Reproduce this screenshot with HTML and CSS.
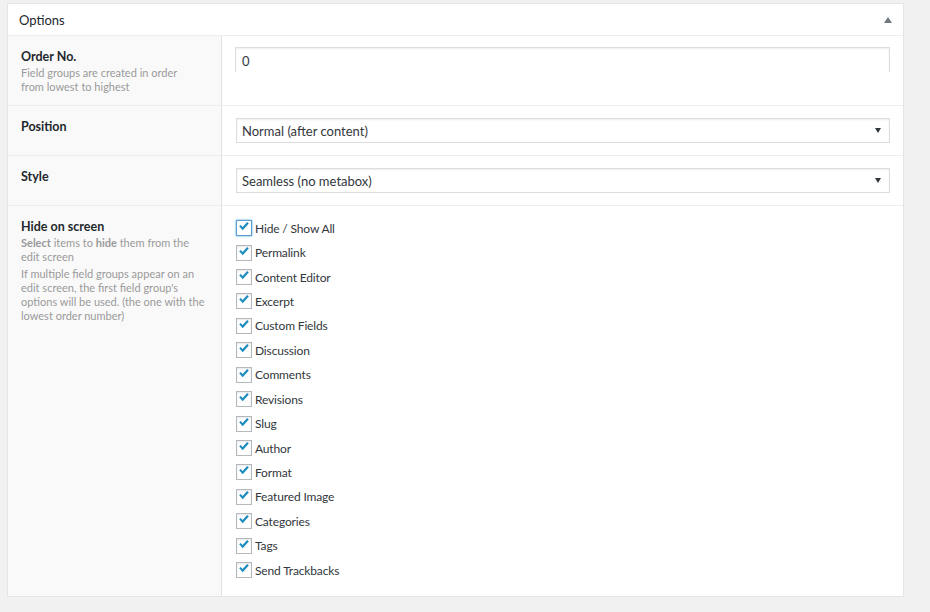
FILE: index.html
```html
<!DOCTYPE html>
<html>
<head>
<meta charset="utf-8">
<link rel="stylesheet" href="styles.css">
</head>
<body>
<div class="postbox">
  <div class="hndle">
    <h2 class="title">Options</h2>
    <span class="toggle"></span>
  </div>
  <div class="inside">
    <div class="field first">
      <div class="label">
        <label>Order No.</label>
        <p class="desc narrow">Field groups are created in order from lowest to highest</p>
      </div>
      <div class="control">
        <div class="text-input">0</div>
      </div>
    </div>
    <div class="field">
      <div class="label">
        <label>Position</label>
      </div>
      <div class="control">
        <div class="select"><span>Normal (after content)</span><span class="caret"></span></div>
      </div>
    </div>
    <div class="field">
      <div class="label">
        <label>Style</label>
      </div>
      <div class="control">
        <div class="select"><span>Seamless (no metabox)</span><span class="caret"></span></div>
      </div>
    </div>
    <div class="field last">
      <div class="label">
        <label>Hide on screen</label>
        <p class="desc"><b>Select</b> items to <b>hide</b> them from the edit screen</p>
        <p class="desc second">If multiple field groups appear on an edit screen, the first field group's options will be used. (the one with the lowest order number)</p>
      </div>
      <div class="control">
        <ul class="checks">
          <li><span class="cb focus"><svg viewBox="0 0 16 16"><path d="M2.5 7.2 L4.3 5.6 L6.4 8.1 L11.6 2.4 L13.5 4.1 L6.5 11.6 Z"/></svg></span>Hide / Show All</li>
          <li><span class="cb"><svg viewBox="0 0 16 16"><path d="M2.5 7.2 L4.3 5.6 L6.4 8.1 L11.6 2.4 L13.5 4.1 L6.5 11.6 Z"/></svg></span>Permalink</li>
          <li><span class="cb"><svg viewBox="0 0 16 16"><path d="M2.5 7.2 L4.3 5.6 L6.4 8.1 L11.6 2.4 L13.5 4.1 L6.5 11.6 Z"/></svg></span>Content Editor</li>
          <li><span class="cb"><svg viewBox="0 0 16 16"><path d="M2.5 7.2 L4.3 5.6 L6.4 8.1 L11.6 2.4 L13.5 4.1 L6.5 11.6 Z"/></svg></span>Excerpt</li>
          <li><span class="cb"><svg viewBox="0 0 16 16"><path d="M2.5 7.2 L4.3 5.6 L6.4 8.1 L11.6 2.4 L13.5 4.1 L6.5 11.6 Z"/></svg></span>Custom Fields</li>
          <li><span class="cb"><svg viewBox="0 0 16 16"><path d="M2.5 7.2 L4.3 5.6 L6.4 8.1 L11.6 2.4 L13.5 4.1 L6.5 11.6 Z"/></svg></span>Discussion</li>
          <li><span class="cb"><svg viewBox="0 0 16 16"><path d="M2.5 7.2 L4.3 5.6 L6.4 8.1 L11.6 2.4 L13.5 4.1 L6.5 11.6 Z"/></svg></span>Comments</li>
          <li><span class="cb"><svg viewBox="0 0 16 16"><path d="M2.5 7.2 L4.3 5.6 L6.4 8.1 L11.6 2.4 L13.5 4.1 L6.5 11.6 Z"/></svg></span>Revisions</li>
          <li><span class="cb"><svg viewBox="0 0 16 16"><path d="M2.5 7.2 L4.3 5.6 L6.4 8.1 L11.6 2.4 L13.5 4.1 L6.5 11.6 Z"/></svg></span>Slug</li>
          <li><span class="cb"><svg viewBox="0 0 16 16"><path d="M2.5 7.2 L4.3 5.6 L6.4 8.1 L11.6 2.4 L13.5 4.1 L6.5 11.6 Z"/></svg></span>Author</li>
          <li><span class="cb"><svg viewBox="0 0 16 16"><path d="M2.5 7.2 L4.3 5.6 L6.4 8.1 L11.6 2.4 L13.5 4.1 L6.5 11.6 Z"/></svg></span>Format</li>
          <li><span class="cb"><svg viewBox="0 0 16 16"><path d="M2.5 7.2 L4.3 5.6 L6.4 8.1 L11.6 2.4 L13.5 4.1 L6.5 11.6 Z"/></svg></span>Featured Image</li>
          <li><span class="cb"><svg viewBox="0 0 16 16"><path d="M2.5 7.2 L4.3 5.6 L6.4 8.1 L11.6 2.4 L13.5 4.1 L6.5 11.6 Z"/></svg></span>Categories</li>
          <li><span class="cb"><svg viewBox="0 0 16 16"><path d="M2.5 7.2 L4.3 5.6 L6.4 8.1 L11.6 2.4 L13.5 4.1 L6.5 11.6 Z"/></svg></span>Tags</li>
          <li><span class="cb"><svg viewBox="0 0 16 16"><path d="M2.5 7.2 L4.3 5.6 L6.4 8.1 L11.6 2.4 L13.5 4.1 L6.5 11.6 Z"/></svg></span>Send Trackbacks</li>
        </ul>
      </div>
    </div>
  </div>
</div>
</body>
</html>
```

FILE: styles.css
```css
html, body {
  margin: 0;
  padding: 0;
  background: #f1f1f1;
}
body {
  padding: 3px 26px 0 7px;
  font-family: Lato, "Liberation Sans", sans-serif;
  font-size: 13px;
  color: #444;
}
.postbox {
  width: 895px;
  background: #fff;
  border: 1px solid #e5e5e5;
  box-shadow: 0 1px 1px rgba(0,0,0,.04);
}
.hndle {
  height: 31px;
  border-bottom: 1px solid #eee;
  display: flex;
  align-items: center;
  justify-content: space-between;
  padding: 0 10px 0 11px;
}
.title {
  margin: 0;
  font-size: 13px;
  font-weight: 400;
  color: #23282d;
  line-height: 18px;
}
.toggle {
  width: 0;
  height: 0;
  border-left: 4px solid transparent;
  border-right: 4px solid transparent;
  border-bottom: 6px solid #72777c;
  margin-right: 1px;
  margin-top: 1px;
}
.field {
  display: flex;
  border-top: 1px solid #eee;
}
.field.first { border-top: 0; }
.label {
  width: 187px;
  flex: none;
  background: #f9f9f9;
  border-right: 1px solid #e1e1e1;
  padding: 12px 13px 11px 13px;
}
.label label {
  display: block;
  font-size: 12.5px;
  font-weight: 700;
  color: #23282d;
  line-height: 18px;
}
.desc {
  margin: 0;
  font-size: 11px;
  line-height: 14px;
  color: #999;
}
.desc.narrow { max-width: 168px; }
.desc b { font-weight: 700; }
.desc.second { margin-top: 3px; }
.control {
  flex: 1;
  padding: 11px 13px 12px 13px;
}
.text-input {
  height: 24px;
  border: 1px solid #ddd;
  border-bottom: 0;
  box-shadow: inset 0 1px 2px rgba(0,0,0,.07);
  padding: 0 6px;
  line-height: 26px;
  color: #32373c;
}
.select {
  margin-top: 1px;
  margin-left: 1px;
  height: 23px;
  border: 1px solid #ddd;
  box-shadow: inset 0 1px 2px rgba(0,0,0,.07);
  display: flex;
  align-items: center;
  justify-content: space-between;
  padding: 0 8px 0 5px;
  color: #32373c;
}
.caret {
  width: 0;
  height: 0;
  border-left: 3.5px solid transparent;
  border-right: 3.5px solid transparent;
  border-top: 5px solid #32373c;
}
.checks {
  list-style: none;
  margin: -1px 0 2px 1px;
  padding: 0;
}
.checks li {
  height: 24.43px;
  display: flex;
  align-items: center;
  color: #32373c;
  font-size: 12px;
  letter-spacing: -0.15px;
}
.cb {
  width: 14px;
  height: 14px;
  border: 1px solid #b4b9be;
  background: #fff;
  box-shadow: inset 0 1px 2px rgba(0,0,0,.1);
  margin-right: 3px;
  display: flex;
  align-items: center;
  justify-content: center;
}
.cb.focus {
  border-color: #5b9dd9;
  box-shadow: 0 0 2px rgba(30,140,190,.8);
}
.cb svg {
  width: 16px;
  height: 16px;
  fill: #1e8cbe;
  margin-top: -2px;
}
```
